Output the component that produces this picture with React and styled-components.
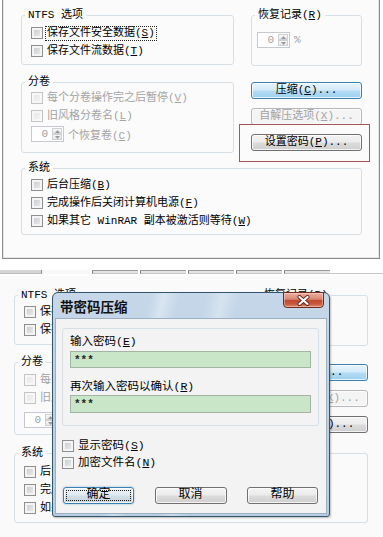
import React from "react";
import styled, { createGlobalStyle, css } from "styled-components";

const FONT = `"Liberation Mono", "Noto Sans CJK SC", monospace`;

const GlobalStyle = createGlobalStyle`
  *, *::before, *::after { box-sizing: border-box; }
  html, body { margin: 0; padding: 0; background: #ffffff; }
  body { font-family: ${FONT}; font-size: 11px; color: #000; }
  #root { width: 383px; height: 537px; overflow: hidden; }
`;

const Page = styled.div`
  width: 383px;
  height: 537px;
  display: flex;
  flex-direction: column;
  background: #fff;
`;

const Shot = styled.section`
  position: relative;
  flex: none;
  height: ${(p) => p.$h}px;
  background: ${(p) => p.$bg};
`;

const Window = styled.div`
  height: 100%;
  display: flex;
  flex-direction: column;
  background: ${(p) => p.$bg};
  ${(p) =>
    p.$framed
      ? css`
          margin-left: 2px;
          width: 378px;
          border: 1px solid #8d8d8d;
          border-top: none;
          box-shadow: inset 1px 0 0 #e4e4e4, inset -1px 0 0 #e4e4e4, inset 0 -1px 0 #e4e4e4;
          padding-left: 18px;
        `
      : css`
          padding-left: 14px;
        `}
`;

const Columns = styled.div`
  display: flex;
  align-items: flex-start;
  gap: ${(p) => p.$gap}px;
`;

const Column = styled.div`
  flex: none;
  width: ${(p) => p.$w}px;
  display: flex;
  flex-direction: column;
`;

const Group = styled.fieldset`
  margin: ${(p) => p.$mt || 0}px 0 0;
  padding: 0;
  border: 1px solid #d5dfe5;
  border-radius: 3px;
  min-width: 0;
  width: ${(p) => (p.$w ? `${p.$w}px` : "auto")};
`;

const Legend = styled.legend`
  margin-left: 3px;
  padding: 0 3px;
  height: 14px;
  line-height: 14px;
  font-size: 11px;
  color: #000;
`;

const Inner = styled.div`
  display: flex;
  flex-direction: column;
  align-items: flex-start;
  padding: ${(p) => p.$pt || 0}px 0 ${(p) => p.$pb || 0}px ${(p) => p.$pl ?? 9}px;
`;

const CheckRow = styled.div`
  display: flex;
  align-items: center;
  gap: 3px;
  height: ${(p) => p.$h || 18}px;
  margin-top: ${(p) => p.$mt || 0}px;
  color: ${(p) => (p.$disabled ? "#a3a3a3" : "#000")};
  font-size: ${(p) => p.$fs || 11}px;
  white-space: nowrap;
`;

const Box = styled.span`
  flex: none;
  width: 12px;
  height: 12px;
  border: 1px solid ${(p) => (p.$disabled ? "#c4c4c4" : "#8e8f8f")};
  box-shadow: inset 0 0 0 2px ${(p) => (p.$disabled ? "#f7f7f7" : "#f4f4f4")};
  background: ${(p) =>
    p.$disabled
      ? "linear-gradient(135deg, #e4e4e4, #f6f6f6)"
      : "linear-gradient(135deg, #c5c8cd, #eeeff0)"};
`;

const Caption = styled.span`
  line-height: 13px;
  padding: 0 1px;
  ${(p) =>
    p.$focus &&
    css`
      outline: 1px dotted #222;
      outline-offset: 0;
    `}
`;

const Key = styled.span`
  text-decoration: underline;
  text-underline-offset: 1px;
`;

const SpinRow = styled.div`
  display: flex;
  align-items: center;
  gap: 4px;
  height: 18px;
  margin-top: ${(p) => p.$mt || 0}px;
  color: #a3a3a3;
  white-space: nowrap;
`;

const Spin = styled.div`
  flex: none;
  display: flex;
  width: 33px;
  height: 16px;
  border: 1px solid #c6c9cf;
  background: #fff;
`;

const SpinValue = styled.span`
  flex: 1;
  text-align: right;
  padding-right: 3px;
  line-height: 14px;
  color: #a0a0a0;
`;

const SpinArrows = styled.div`
  flex: none;
  width: 12px;
  display: flex;
  flex-direction: column;
  padding: 1px;
`;

const SpinArrow = styled.span`
  flex: 1;
  display: flex;
  align-items: center;
  justify-content: center;
  border: 1px solid #cdd0d4;
  background: linear-gradient(#f8f8f8, #e6e6e6);
`;

const ButtonStack = styled.div`
  display: flex;
  flex-direction: column;
  gap: 9px;
  margin-top: ${(p) => p.$mt}px;
`;

const Highlight = styled.div`
  position: relative;
`;

const Annotation = styled.div`
  position: absolute;
  left: -12px;
  right: -8px;
  top: -10px;
  bottom: -11px;
  border: 1px solid #a65454;
  pointer-events: none;
`;

const Button = styled.button`
  display: flex;
  align-items: center;
  justify-content: center;
  width: ${(p) => (p.$w ? `${p.$w}px` : "100%")};
  height: 17px;
  padding: 0;
  margin: 0;
  font-family: ${FONT};
  font-size: ${(p) => p.$fs || 11}px;
  line-height: 15px;
  color: #000;
  white-space: nowrap;
  border: 1px solid #707070;
  border-radius: 3px;
  background: linear-gradient(#f3f3f3 0%, #ebebeb 48%, #dcdcdc 52%, #cfcfcf 100%);
  box-shadow: inset 0 0 0 1px rgba(255, 255, 255, 0.75);
  ${(p) =>
    p.$variant === "blue" &&
    css`
      border-color: #3c7fb1;
      background: linear-gradient(#e6f4fc 0%, #d2ebf9 48%, #b5dcf3 52%, #9ccfee 100%);
    `}
  ${(p) =>
    p.$variant === "disabled" &&
    css`
      color: #a3a3a3;
      border-color: #b5b8bb;
      background: #f4f4f4;
    `}
  ${(p) =>
    p.$variant === "focus" &&
    css`
      border-color: #3c7fb1;
      background: linear-gradient(#eef4f8 0%, #e2ebf1 48%, #d3dee6 52%, #c8d5de 100%);
      box-shadow: inset 0 0 0 1px rgba(255, 255, 255, 0.75), 0 0 2px rgba(60, 127, 177, 0.6);
      outline: 1px dotted #1a1a1a;
      outline-offset: -4px;
    `}
`;

const TabStrip = styled.div`
  flex: none;
  height: 17px;
  display: flex;
  align-items: flex-end;
  padding-bottom: 2px;
`;

const TabPiece = styled.div`
  flex: none;
  width: ${(p) => p.$w}px;
  height: 4px;
  ${(p) =>
    p.$kind === "first" &&
    css`
      background: #d6d6d6;
      border-bottom: 1px solid #b9b9b9;
      border-right: 1px solid #8a8a8a;
    `}
  ${(p) =>
    p.$kind === "selected" &&
    css`
      background: #f7f7f7;
    `}
  ${(p) =>
    p.$kind === "tab" &&
    css`
      margin-left: 2px;
      border-left: 1px solid #7c7c7c;
      border-top: 1px solid #9a9a9a;
      border-bottom: 1px solid #c4c4c4;
      background: #e4e4e4;
    `}
`;

const TabRest = styled.div`
  flex: 1;
  height: 2px;
  border-bottom: 1px solid #c4c4c4;
`;

/* ---------- dialog ---------- */

const Dialog = styled.div`
  position: absolute;
  left: 52px;
  top: 16px;
  width: 278px;
  height: 225px;
  display: flex;
  flex-direction: column;
  padding: 0 2px 2px;
  border: 1px solid #33566c;
  border-radius: 6px 6px 3px 3px;
  background: linear-gradient(
      103deg,
      transparent 0 30%,
      rgba(255, 255, 255, 0.35) 34%,
      transparent 39%,
      transparent 47%,
      rgba(255, 255, 255, 0.3) 52%,
      transparent 57%
    ),
    linear-gradient(#c5d7e9, #b7cce0);
  box-shadow: 1px 1px 2px rgba(0, 0, 0, 0.25);
`;

const TitleBar = styled.div`
  flex: none;
  height: 25px;
  display: flex;
  align-items: flex-start;
  justify-content: space-between;
  padding-left: 5px;
`;

const Title = styled.span`
  margin-top: 5px;
  font-family: "Noto Sans CJK SC", sans-serif;
  font-weight: 700;
  font-size: 13.5px;
  line-height: 16px;
  color: #111;
`;

const CloseButton = styled.div`
  margin-top: -1px;
  margin-right: 3px;
  width: 41px;
  height: 16px;
  display: flex;
  align-items: center;
  justify-content: center;
  border: 1px solid #6f2c22;
  border-radius: 0 0 4px 4px;
  background: linear-gradient(#eab1a4 0%, #d98671 45%, #c14a31 52%, #c85a3f 80%, #dd8d73 100%);
  box-shadow: inset 0 0 0 1px rgba(255, 220, 210, 0.45);
`;

const Client = styled.div`
  flex: 1;
  display: flex;
  flex-direction: column;
  padding: 9px 7px 0 6px;
  background: #f3f3f3;
  border: 1px solid #9cb0c3;
`;

const PwGroup = styled.div`
  display: flex;
  flex-direction: column;
  padding: 6px 7px 12px 7px;
  border: 1px solid #d5dfe5;
  border-radius: 3px;
`;

const FieldLabel = styled.div`
  height: 14px;
  line-height: 14px;
  font-size: 11.5px;
  margin-top: ${(p) => p.$mt || 0}px;
  white-space: nowrap;
`;

const PwInput = styled.div`
  height: ${(p) => p.$h}px;
  margin-top: ${(p) => p.$mt}px;
  padding-left: 3px;
  display: flex;
  align-items: center;
  background: #c9e6c8;
  border: 1px solid #a4b4a4;
  font-size: 11px;
  font-weight: 700;
  color: #222;
`;

const Checks = styled.div`
  display: flex;
  flex-direction: column;
  margin-top: 11px;
`;

const ButtonRow = styled.div`
  display: flex;
  justify-content: space-between;
  margin-top: 16px;
  padding: 0 1px;
`;

/* ---------- data ---------- */

const Mn = ({ text, k, tail = "" }) => (
  <>
    {text}(<Key>{k}</Key>){tail}
  </>
);

const Arrow = ({ up, color = "#9a9a9a" }) => (
  <svg width="5" height="3" viewBox="0 0 5 3">
    <path d={up ? "M0 3 L2.5 0 L5 3 Z" : "M0 0 L2.5 3 L5 0 Z"} fill={color} />
  </svg>
);

const SpinBox = () => (
  <Spin>
    <SpinValue>0</SpinValue>
    <SpinArrows>
      <SpinArrow>
        <Arrow up />
      </SpinArrow>
      <SpinArrow>
        <Arrow />
      </SpinArrow>
    </SpinArrows>
  </Spin>
);

const Check = ({ children, disabled, focus, h, fs }) => (
  <CheckRow $disabled={disabled} $h={h} $fs={fs}>
    <Box $disabled={disabled} />
    <Caption $focus={focus}>{children}</Caption>
  </CheckRow>
);

const LAYOUTS = {
  top: {
    leftW: 213,
    gap: 17,
    rightW: 111,
    sysW: 341,
    ntfsMt: 8,
    ntfsPt: 2,
    ntfsPb: 4,
    volPt: 0,
    spinMt: 0,
    volPb: 9,
    recPt: 9,
    recPb: 16,
    btnMt: 16,
    sysMt: 8,
    sysPt: 1,
    sysPb: 4,
    annotate: true,
  },
  bottom: {
    leftW: 220,
    gap: 23,
    rightW: 111,
    sysW: 354,
    ntfsMt: 12,
    ntfsPt: 1,
    ntfsPb: 5,
    volPt: 2,
    spinMt: 4,
    volPb: 5,
    recPt: 9,
    recPb: 16,
    btnMt: 18,
    sysMt: 11,
    sysPt: 3,
    sysPb: 5,
    annotate: false,
  },
};

const OptionsPanel = ({ layout }) => {
  const L = LAYOUTS[layout];
  const pwButton = (
    <Button>
      <Mn text="设置密码" k="P" tail="..." />
    </Button>
  );
  return (
    <>
      <Columns $gap={L.gap}>
        <Column $w={L.leftW}>
          <Group $mt={L.ntfsMt}>
            <Legend>NTFS 选项</Legend>
            <Inner $pt={L.ntfsPt} $pb={L.ntfsPb}>
              <Check focus={layout === "top"}>
                <Mn text="保存文件安全数据" k="S" />
              </Check>
              <Check>
                <Mn text="保存文件流数据" k="T" />
              </Check>
            </Inner>
          </Group>
          <Group $mt={10}>
            <Legend>分卷</Legend>
            <Inner $pt={L.volPt} $pb={L.volPb}>
              <Check disabled>
                <Mn text="每个分卷操作完之后暂停" k="V" />
              </Check>
              <Check disabled>
                <Mn text="旧风格分卷名" k="L" />
              </Check>
              <SpinRow $mt={L.spinMt}>
                <SpinBox />
                <span>
                  <Mn text="个恢复卷" k="C" />
                </span>
              </SpinRow>
            </Inner>
          </Group>
        </Column>
        <Column $w={L.rightW}>
          <Group $mt={L.ntfsMt}>
            <Legend>
              <Mn text="恢复记录" k="R" />
            </Legend>
            <Inner $pt={L.recPt} $pb={L.recPb} $pl={5}>
              <SpinRow>
                <SpinBox />
                <span>%</span>
              </SpinRow>
            </Inner>
          </Group>
          <ButtonStack $mt={L.btnMt}>
            <Button $variant="blue">
              <Mn text="压缩" k="C" tail="..." />
            </Button>
            <Button $variant="disabled">
              <Mn text="自解压选项" k="X" tail="..." />
            </Button>
            {L.annotate ? (
              <Highlight>
                {pwButton}
                <Annotation />
              </Highlight>
            ) : (
              pwButton
            )}
          </ButtonStack>
        </Column>
      </Columns>
      <Group $mt={L.sysMt} $w={L.sysW}>
        <Legend>系统</Legend>
        <Inner $pt={L.sysPt} $pb={L.sysPb}>
          <Check>
            <Mn text="后台压缩" k="B" />
          </Check>
          <Check>
            <Mn text="完成操作后关闭计算机电源" k="F" />
          </Check>
          <Check>
            <Mn text="如果其它 WinRAR 副本被激活则等待" k="W" />
          </Check>
        </Inner>
      </Group>
    </>
  );
};

const CloseGlyph = () => (
  <svg width="13" height="11" viewBox="0 0 13 11">
    <path d="M2.5 2 L10.5 9 M10.5 2 L2.5 9" stroke="#6a2016" strokeWidth="4" strokeLinecap="round" />
    <path d="M2.5 2 L10.5 9 M10.5 2 L2.5 9" stroke="#ffffff" strokeWidth="2.3" strokeLinecap="round" />
  </svg>
);

const PasswordDialog = () => (
  <Dialog>
    <TitleBar>
      <Title>带密码压缩</Title>
      <CloseButton>
        <CloseGlyph />
      </CloseButton>
    </TitleBar>
    <Client>
      <PwGroup>
        <FieldLabel>
          <Mn text="输入密码" k="E" />
        </FieldLabel>
        <PwInput $h={17} $mt={2}>***</PwInput>
        <FieldLabel $mt={12}>
          <Mn text="再次输入密码以确认" k="R" />
        </FieldLabel>
        <PwInput $h={18} $mt={1}>***</PwInput>
      </PwGroup>
      <Checks>
        <Check h={17} fs={11.5}>
          <Mn text="显示密码" k="S" />
        </Check>
        <Check h={17} fs={11.5}>
          <Mn text="加密文件名" k="N" />
        </Check>
      </Checks>
      <ButtonRow>
        <Button $w={71} $fs={12} $variant="focus">确定</Button>
        <Button $w={72} $fs={12}>取消</Button>
        <Button $w={71} $fs={12}>帮助</Button>
      </ButtonRow>
    </Client>
  </Dialog>
);

export default function App() {
  return (
    <Page>
      <GlobalStyle />
      <Shot $h={259} $bg="#ffffff">
        <Window $framed $bg="#fbfbfb">
          <OptionsPanel layout="top" />
        </Window>
      </Shot>
      <TabStrip>
        <TabPiece $w={42} $kind="first" />
        <TabPiece $w={48} $kind="selected" />
        <TabPiece $w={46} $kind="tab" />
        <TabPiece $w={46} $kind="tab" />
        <TabPiece $w={46} $kind="tab" />
        <TabPiece $w={46} $kind="tab" />
        <TabPiece $w={46} $kind="tab" />
        <TabRest />
      </TabStrip>
      <Shot $h={261} $bg="#fafafa">
        <Window $bg="#fafafa">
          <OptionsPanel layout="bottom" />
        </Window>
        <PasswordDialog />
      </Shot>
    </Page>
  );
}
